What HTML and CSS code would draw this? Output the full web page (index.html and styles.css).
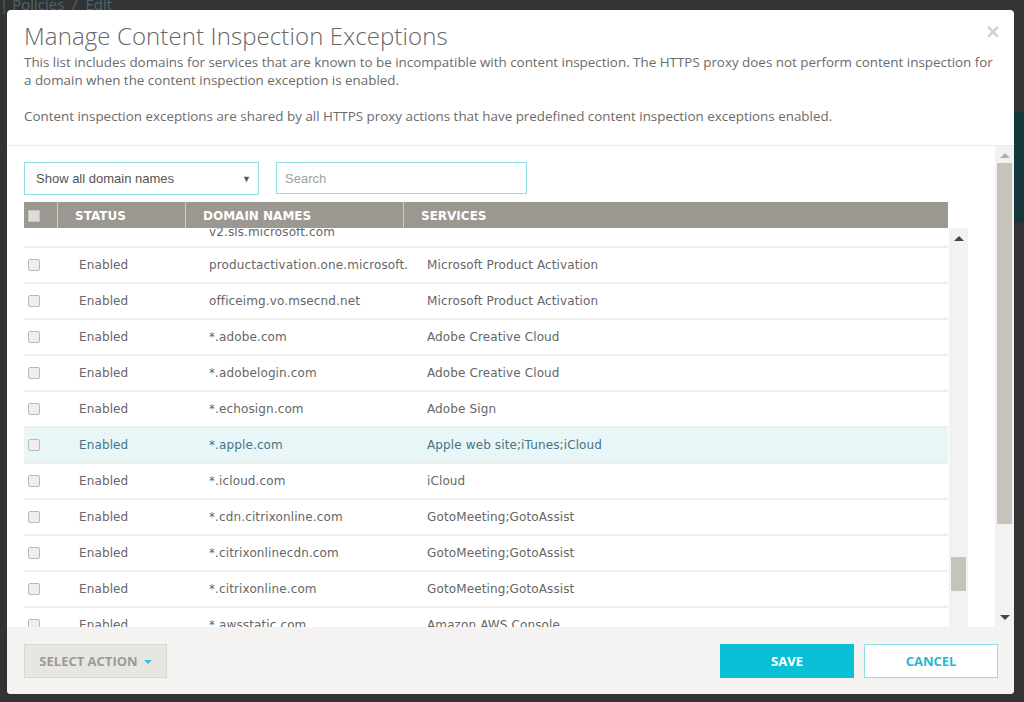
FILE: index.html
```html
<!DOCTYPE html>
<html lang="en">
<head>
<meta charset="utf-8">
<title>Manage Content Inspection Exceptions</title>
<link rel="stylesheet" href="styles.css">
</head>
<body>
<div class="backdrop">
  <div class="crumbs">| Policies &nbsp;/ &nbsp;Edit</div>
  <div class="side-band"></div>
  <div class="modal">
    <div class="modal-header">
      <div class="title-row">
        <h1 class="title">Manage Content Inspection Exceptions</h1>
        <span class="close">&times;</span>
      </div>
      <p class="desc">This list includes domains for services that are known to be incompatible with content inspection. The HTTPS proxy does not perform content inspection for a domain when the content inspection exception is enabled.</p>
      <p class="desc">Content inspection exceptions are shared by all HTTPS proxy actions that have predefined content inspection exceptions enabled.</p>
    </div>
    <div class="modal-body">
      <div class="body-main">
        <div class="filters">
          <div class="select"><span>Show all domain names</span><span class="arrow">&#9660;</span></div>
          <div class="search"><span>Search</span></div>
        </div>
        <div class="table">
          <div class="thead">
            <div class="th th-check"><span class="cb cb-head"></span></div>
            <div class="th">STATUS</div>
            <div class="th">DOMAIN NAMES</div>
            <div class="th th-last">SERVICES</div>
          </div>
          <div class="tbody-wrap">
            <div class="tbody">
              <div class="rows">
                <div class="row row-first">
                  <div class="td td-check"><span class="cb"></span></div>
                  <div class="td td-status"></div>
                  <div class="td td-domain">v2.sls.microsoft.com</div>
                  <div class="td td-service"></div>
                </div>
                <div class="row">
                  <div class="td td-check"><span class="cb"></span></div>
                  <div class="td td-status">Enabled</div>
                  <div class="td td-domain">productactivation.one.microsoft.</div>
                  <div class="td td-service">Microsoft Product Activation</div>
                </div>
                <div class="row">
                  <div class="td td-check"><span class="cb"></span></div>
                  <div class="td td-status">Enabled</div>
                  <div class="td td-domain">officeimg.vo.msecnd.net</div>
                  <div class="td td-service">Microsoft Product Activation</div>
                </div>
                <div class="row">
                  <div class="td td-check"><span class="cb"></span></div>
                  <div class="td td-status">Enabled</div>
                  <div class="td td-domain">*.adobe.com</div>
                  <div class="td td-service">Adobe Creative Cloud</div>
                </div>
                <div class="row">
                  <div class="td td-check"><span class="cb"></span></div>
                  <div class="td td-status">Enabled</div>
                  <div class="td td-domain">*.adobelogin.com</div>
                  <div class="td td-service">Adobe Creative Cloud</div>
                </div>
                <div class="row">
                  <div class="td td-check"><span class="cb"></span></div>
                  <div class="td td-status">Enabled</div>
                  <div class="td td-domain">*.echosign.com</div>
                  <div class="td td-service">Adobe Sign</div>
                </div>
                <div class="row row-hover">
                  <div class="td td-check"><span class="cb"></span></div>
                  <div class="td td-status">Enabled</div>
                  <div class="td td-domain">*.apple.com</div>
                  <div class="td td-service">Apple web site;iTunes;iCloud</div>
                </div>
                <div class="row">
                  <div class="td td-check"><span class="cb"></span></div>
                  <div class="td td-status">Enabled</div>
                  <div class="td td-domain">*.icloud.com</div>
                  <div class="td td-service">iCloud</div>
                </div>
                <div class="row">
                  <div class="td td-check"><span class="cb"></span></div>
                  <div class="td td-status">Enabled</div>
                  <div class="td td-domain">*.cdn.citrixonline.com</div>
                  <div class="td td-service">GotoMeeting;GotoAssist</div>
                </div>
                <div class="row">
                  <div class="td td-check"><span class="cb"></span></div>
                  <div class="td td-status">Enabled</div>
                  <div class="td td-domain">*.citrixonlinecdn.com</div>
                  <div class="td td-service">GotoMeeting;GotoAssist</div>
                </div>
                <div class="row">
                  <div class="td td-check"><span class="cb"></span></div>
                  <div class="td td-status">Enabled</div>
                  <div class="td td-domain">*.citrixonline.com</div>
                  <div class="td td-service">GotoMeeting;GotoAssist</div>
                </div>
                <div class="row">
                  <div class="td td-check"><span class="cb"></span></div>
                  <div class="td td-status">Enabled</div>
                  <div class="td td-domain">*.awsstatic.com</div>
                  <div class="td td-service">Amazon AWS Console</div>
                </div>
              </div>
              <div class="inner-scroll">
                <span class="tri tri-up dark"></span>
                <span class="inner-spacer"></span>
                <span class="inner-thumb"></span>
              </div>
            </div>
          </div>
        </div>
      </div>
      <div class="outer-scroll">
        <span class="tri tri-up light"></span>
        <span class="outer-thumb"></span>
        <span class="outer-spacer"></span>
        <span class="tri tri-down dark"></span>
      </div>
    </div>
    <div class="modal-footer">
      <div class="btn btn-action">SELECT ACTION <span class="caret"></span></div>
      <div class="footer-right">
        <div class="btn btn-save">SAVE</div>
        <div class="btn btn-cancel">CANCEL</div>
      </div>
    </div>
  </div>
</div>
</body>
</html>
```
FILE: styles.css
```css
* { box-sizing: border-box; }
html, body { margin: 0; padding: 0; }
body {
  width: 1024px;
  height: 702px;
  overflow: hidden;
  background: #333333;
  font-family: "Open Sans", "DejaVu Sans", sans-serif;
}
.backdrop {
  position: relative;
  width: 1024px;
  height: 702px;
  padding: 10px 10px 0 7px;
}
.crumbs {
  position: absolute;
  left: 0;
  top: -6px;
  font-size: 15px;
  color: #4a6670;
  font-family: "Open Sans", sans-serif;
}
.side-band {
  position: absolute;
  right: 0;
  top: 112px;
  width: 10px;
  height: 110px;
  background: #12363a;
}
.modal {
  position: relative;
  width: 1007px;
  height: 684px;
  background: #ffffff;
  border-radius: 4px;
  display: flex;
  flex-direction: column;
  overflow: hidden;
}
.modal-header {
  height: 136px;
  padding: 9px 17px 0 17px;
  border-bottom: 1px solid #ececec;
  flex: none;
}
.title-row {
  display: flex;
  justify-content: space-between;
  align-items: flex-start;
}
.title {
  margin: 0;
  font-family: "Open Sans", sans-serif;
  font-weight: 300;
  font-size: 24px;
  line-height: 34px;
  color: #666666;
  letter-spacing: 0.1px;
}
.close {
  font-family: "DejaVu Sans", sans-serif;
  font-size: 19px;
  font-weight: bold;
  line-height: 22px;
  color: #cfcfcf;
  margin-top: 1px;
  margin-right: -4px;
}
.desc {
  margin: 0 0 18px 0;
  font-size: 13.4px;
  line-height: 18px;
  color: #6b6b6b;
}
.modal-body {
  flex: none;
  height: 481px;
  display: flex;
}
.body-main {
  flex: 1;
  padding: 16px 0 0 17px;
  overflow: hidden;
}
.filters {
  display: flex;
  gap: 17px;
  height: 33px;
}
.select {
  width: 235px;
  height: 33px;
  border: 1px solid #8fdde6;
  display: flex;
  align-items: center;
  justify-content: space-between;
  padding: 0 7px 0 11px;
  font-family: "Liberation Sans", Arial, sans-serif;
  font-size: 13px;
  color: #555555;
}
.select .arrow {
  font-size: 9px;
  color: #555;
}
.search {
  width: 251px;
  height: 32px;
  border: 1px solid #8fdde6;
  display: flex;
  align-items: center;
  padding: 0 8px;
  font-family: "Liberation Sans", Arial, sans-serif;
  font-size: 13px;
  color: #a0a0a0;
}
.table {
  margin-top: 7px;
  width: 944px;
}
.thead {
  display: grid;
  grid-template-columns: 34px 128px 218px 544px;
  width: 924px;
  height: 26px;
  background: #9b9791;
}
.th {
  display: flex;
  align-items: center;
  padding-left: 17px;
  padding-top: 1px;
  border-right: 1px solid #cfccc7;
  font-family: "DejaVu Sans", Verdana, sans-serif;
  font-weight: bold;
  font-size: 12px;
  color: #ffffff;
}
.th-check { padding-left: 4px; }
.th-last { border-right: none; }
.cb {
  display: inline-block;
  width: 12px;
  height: 12px;
  border: 1px solid #b9b9b9;
  border-radius: 2px;
  background: #efefef;
}
.cb-head {
  background: #dedcd8;
  border-color: #c9c6c1;
  border-radius: 1px;
}
.tbody-wrap {
  height: 399px;
  overflow: hidden;
}
.tbody {
  display: flex;
}
.rows {
  width: 924px;
  margin-top: -16px;
}
.row {
  display: grid;
  grid-template-columns: 34px 128px 218px 544px;
  border-bottom: 2px solid #eeeeee;
  height: 36px;
  font-family: "DejaVu Sans", Verdana, sans-serif;
  font-size: 12px;
  letter-spacing: 0.12px;
  color: #666666;
}
.row-first .td-domain { padding-top: 5px; }
.row-first .td-check { align-items: flex-start; padding-top: 3px; }
.row-hover {
  background: #e9f6f8;
  color: #437585;
}
.td {
  display: flex;
  align-items: center;
  white-space: nowrap;
  line-height: 18px;
}
.td-check { padding-left: 4px; }
.td-status { padding-left: 21px; }
.td-domain { padding-left: 23px; }
.td-service { padding-left: 23px; }
.inner-scroll {
  width: 19px;
  margin-left: 1px;
  height: 399px;
  background: #f2f2f2;
  display: flex;
  flex-direction: column;
  align-items: center;
}
.tri {
  display: block;
  width: 0;
  height: 0;
  border-left: 5px solid transparent;
  border-right: 5px solid transparent;
}
.tri-up { border-bottom: 5px solid #444; }
.tri-down { border-top: 5px solid #444; }
.tri-up.light { border-bottom-color: #b0b0b0; }
.inner-scroll .tri-up { margin-top: 8px; }
.inner-spacer { height: 316px; flex: none; }
.inner-thumb {
  width: 15px;
  height: 34px;
  background: #c6c3bc;
}
.outer-scroll {
  width: 19px;
  flex: none;
  height: 481px;
  background: #f3f2f0;
  display: flex;
  flex-direction: column;
  align-items: center;
}
.outer-scroll .tri-up { margin-top: 7px; }
.outer-thumb {
  margin-top: 5px;
  width: 15px;
  height: 361px;
  background: #c6c3bd;
}
.outer-spacer { flex: 1; }
.outer-scroll .tri-down { margin-bottom: 7px; }
.modal-footer {
  flex: 1;
  background: #f4f3f1;
  display: flex;
  justify-content: space-between;
  padding: 17px 16px 0 17px;
}
.footer-right {
  display: flex;
  gap: 10px;
}
.btn {
  height: 34px;
  display: flex;
  align-items: center;
  justify-content: center;
  font-family: "Open Sans", sans-serif;
  font-weight: bold;
  font-size: 13px;
}
.btn-action {
  width: 143px;
  background: #e7e6e3;
  border: 1px solid #d9d8d5;
  color: #9a9a9a;
  gap: 6px;
}
.caret {
  display: inline-block;
  width: 0;
  height: 0;
  border-left: 4px solid transparent;
  border-right: 4px solid transparent;
  border-top: 4px solid #2bc3d6;
  margin-top: 2px;
}
.btn-save {
  width: 134px;
  background: #09c0d6;
  color: #ffffff;
}
.btn-cancel {
  width: 134px;
  background: #ffffff;
  border: 1px solid #8ddfe8;
  color: #1ebad0;
}
```
